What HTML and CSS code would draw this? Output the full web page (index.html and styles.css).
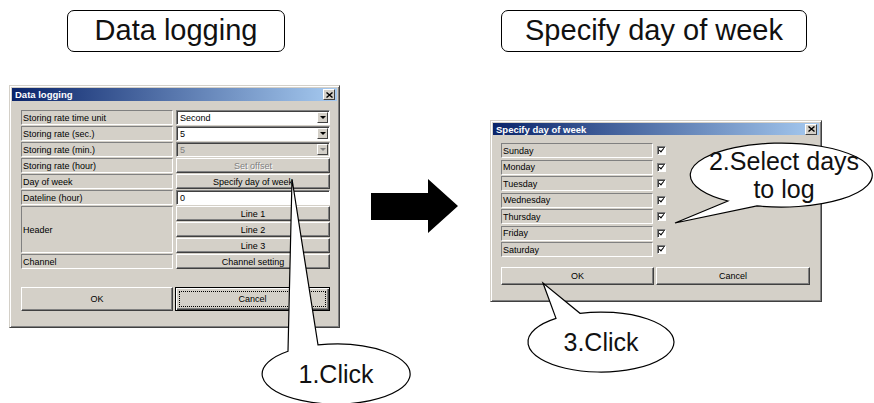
FILE: index.html
```html
<!DOCTYPE html>
<html lang="en">
<head>
    <meta charset="UTF-8">
    <meta name="viewport" content="width=device-width, initial-scale=1.0">
    <link rel="stylesheet" href="styles.css">
</head>
<body>
    <div class="stage">
        <!-- Левое окно: Data logging -->
        <div class="col col-left">
            <div class="caption caption-left">Data logging</div>
            <div class="window win-log">
                <div class="titlebar">
                    <span class="title">Data logging</span>
                    <span class="close"><svg width="7" height="6" viewBox="0 0 7 6"><path d="M0.5 0.5L6.5 5.5M6.5 0.5L0.5 5.5" stroke="#000" stroke-width="1.4"/></svg></span>
                </div>
                <div class="body body-log">
                    <div class="grid grid-log">
                        <div class="lbl">Storing rate time unit</div>
                        <div class="combo"><span>Second</span><i class="drop"></i></div>
                        <div class="lbl">Storing rate (sec.)</div>
                        <div class="combo"><span>5</span><i class="drop"></i></div>
                        <div class="lbl">Storing rate (min.)</div>
                        <div class="combo disabled"><span>5</span><i class="drop"></i></div>
                        <div class="lbl">Storing rate (hour)</div>
                        <div class="btn disabled">Set offset</div>
                        <div class="lbl">Day of week</div>
                        <div class="btn">Specify day of week</div>
                        <div class="lbl">Dateline (hour)</div>
                        <div class="edit">0</div>
                        <div class="lbl lbl-tall">Header</div>
                        <div class="btn">Line 1</div>
                        <div class="btn">Line 2</div>
                        <div class="btn">Line 3</div>
                        <div class="lbl">Channel</div>
                        <div class="btn">Channel setting</div>
                    </div>
                    <div class="btnrow btnrow-log">
                        <div class="btn btn-ok">OK</div>
                        <div class="btn btn-cancel focus"><span class="ring">Cancel</span></div>
                    </div>
                </div>
            </div>
        </div>

        <div class="arrow">
            <svg width="87" height="54" viewBox="0 0 87 54"><polygon points="0,14 57,14 57,0 87,27 57,54 57,41 0,41" fill="#000"/></svg>
        </div>

        <!-- Правое окно: Specify day of week -->
        <div class="col col-right">
            <div class="caption caption-right">Specify day of week</div>
            <div class="window win-days">
                <div class="titlebar">
                    <span class="title">Specify day of week</span>
                    <span class="close"><svg width="7" height="6" viewBox="0 0 7 6"><path d="M0.5 0.5L6.5 5.5M6.5 0.5L0.5 5.5" stroke="#000" stroke-width="1.4"/></svg></span>
                </div>
                <div class="body body-days">
                    <div class="grid grid-days">
                        <div class="lbl">Sunday</div><span class="check"></span>
                        <div class="lbl">Monday</div><span class="check"></span>
                        <div class="lbl">Tuesday</div><span class="check"></span>
                        <div class="lbl">Wednesday</div><span class="check"></span>
                        <div class="lbl">Thursday</div><span class="check"></span>
                        <div class="lbl">Friday</div><span class="check"></span>
                        <div class="lbl">Saturday</div><span class="check"></span>
                    </div>
                    <div class="btnrow btnrow-days">
                        <div class="btn btn-ok2">OK</div>
                        <div class="btn btn-cancel2">Cancel</div>
                    </div>
                </div>
            </div>
        </div>

        <!-- Выноски поверх окон -->
        <svg class="callouts" width="874" height="403" viewBox="0 0 874 403">
            <path d="M288 351.2 L292 179 L318 344.9 A74 30 0 1 1 288 351.2 Z" fill="#fff" stroke="#000" stroke-width="1.2"/>
            <path d="M728 201 L675 223 L757 205.9 A91 32 0 1 0 728 201 Z" fill="#fff" stroke="#000" stroke-width="1.2"/>
            <path d="M556 318.4 L543 283 L580 313.3 A73 30 0 1 1 556 318.4 Z" fill="#fff" stroke="#000" stroke-width="1.2"/>
        </svg>
        <div class="callout-label label-1">1.Click</div>
        <div class="callout-label label-2">2.Select days<br>to log</div>
        <div class="callout-label label-3">3.Click</div>
    </div>
</body>
</html>
```

FILE: styles.css
```css
body {
    margin: 0;
    padding: 0;
    background-color: #fff;
    font-family: "Liberation Sans", Arial, sans-serif;
}

.stage {
    position: relative;
    width: 874px;
    height: 403px;
    overflow: hidden;
    display: flex;
    align-items: flex-start;
    padding-top: 10px;
    box-sizing: border-box;
}

.col {
    display: flex;
    flex-direction: column;
}

.col-left {
    margin-left: 9px;
    width: 331px;
}

.col-right {
    margin-left: 32px;
    width: 332px;
}

/* Подписи в рамках сверху */
.caption {
    height: 42px;
    box-sizing: border-box;
    border: 1.5px solid #000;
    border-radius: 7px;
    font-size: 29px;
    line-height: 39px;
    text-align: center;
    color: #111;
}

.caption-left {
    width: 218px;
    margin-left: 58px;
}

.caption-right {
    width: 306px;
    margin-left: 11px;
}

.arrow {
    margin-left: 31px;
    margin-top: 169px;
    width: 87px;
    height: 54px;
}

/* Окно в стиле Windows Classic */
.window {
    box-sizing: border-box;
    background-color: #d4d0c8;
    border: 1px solid;
    border-color: #d4d0c8 #404040 #404040 #d4d0c8;
    box-shadow: inset 1px 1px #fff, inset -1px -1px #808080;
    padding: 2px;
    font-size: 9px;
    color: #000;
}

.win-log {
    margin-top: 33px;
}

.win-days {
    margin-top: 68px;
}

.titlebar {
    display: flex;
    align-items: center;
    justify-content: space-between;
    height: 13px;
    padding: 0 2px 0 3px;
    background: linear-gradient(to right, #0a246a, #a6caf0);
    color: #fff;
    font-weight: bold;
    font-size: 9.5px;
}

.win-days .titlebar {
    height: 12px;
}

.close {
    display: flex;
    align-items: center;
    justify-content: center;
    width: 10px;
    height: 9px;
    background-color: #d4d0c8;
    border: 1px solid;
    border-color: #fff #404040 #404040 #fff;
}

.body-log {
    padding: 9px 7px 14px 9px;
}

.body-days {
    padding: 8px 7px 14px 8px;
}

.grid {
    display: grid;
    grid-auto-rows: 15px;
}

.grid-log {
    grid-template-columns: 152px 154px;
    column-gap: 3px;
    row-gap: 1px;
}

.grid-days {
    grid-template-columns: 152px 9px;
    column-gap: 4px;
    row-gap: 1.5px;
}

.lbl {
    box-sizing: border-box;
    display: flex;
    align-items: center;
    padding-left: 1px;
    border: 1px solid;
    border-color: #808080 #fff #fff #808080;
    white-space: nowrap;
}

.lbl-tall {
    grid-row: span 3;
}

.combo, .edit {
    box-sizing: border-box;
    display: flex;
    align-items: center;
    padding-left: 3px;
    background-color: #fff;
    border: 1px solid;
    border-color: #808080 #fff #fff #808080;
    box-shadow: inset 1px 1px #404040;
}

.combo.disabled {
    background-color: #d4d0c8;
    color: #808080;
}

.drop {
    position: relative;
    margin-left: auto;
    margin-right: 1px;
    width: 11px;
    height: 11px;
    box-sizing: border-box;
    background-color: #d4d0c8;
    border: 1px solid;
    border-color: #fff #404040 #404040 #fff;
}

.drop::after {
    content: "";
    position: absolute;
    left: 2px;
    top: 3px;
    border-left: 3px solid transparent;
    border-right: 3px solid transparent;
    border-top: 3px solid #000;
}

.combo.disabled .drop::after {
    border-top-color: #808080;
}

.btn {
    box-sizing: border-box;
    display: flex;
    align-items: center;
    justify-content: center;
    background-color: #d4d0c8;
    border: 1px solid;
    border-color: #fff #404040 #404040 #fff;
    box-shadow: inset -1px -1px #808080;
    white-space: nowrap;
}

.btn.disabled {
    color: #808080;
    text-shadow: 1px 1px #fff;
}

.btn.focus {
    border-color: #000;
    box-shadow: inset 1px 1px #fff, inset -1px -1px #404040, inset -2px -2px #808080;
}

.ring {
    flex: 1;
    align-self: stretch;
    display: flex;
    align-items: center;
    justify-content: center;
    margin: 3px;
    border: 1px dotted #000;
}

.btnrow {
    display: flex;
    gap: 2px;
}

.btnrow-log {
    margin-top: 18px;
    height: 24px;
}

.btn-ok {
    width: 152px;
}

.btn-cancel {
    width: 155px;
}

.btnrow-days {
    margin-top: 10px;
    height: 18px;
}

.btn-ok2 {
    width: 153px;
}

.btn-cancel2 {
    width: 154px;
}

/* Флажки */
.check {
    align-self: center;
    width: 9px;
    height: 9px;
    box-sizing: border-box;
    background-color: #fff;
    border: 1px solid;
    border-color: #808080 #fff #fff #808080;
    box-shadow: inset 1px 1px #404040;
    position: relative;
}

.check::after {
    content: "";
    position: absolute;
    left: 2px;
    top: 0px;
    width: 2px;
    height: 4px;
    border-right: 1.5px solid #000;
    border-bottom: 1.5px solid #000;
    transform: rotate(40deg);
}

/* Выноски */
.callouts {
    position: absolute;
    left: 0;
    top: 0;
    pointer-events: none;
}

.callout-label {
    position: absolute;
    font-size: 25px;
    line-height: 23px;
    text-align: center;
    color: #111;
    white-space: nowrap;
}

.label-1 {
    left: 286px;
    top: 363px;
    width: 100px;
}

.label-2 {
    left: 694px;
    top: 147px;
    width: 180px;
    line-height: 28px;
}

.label-3 {
    left: 551px;
    top: 331px;
    width: 100px;
}
```
